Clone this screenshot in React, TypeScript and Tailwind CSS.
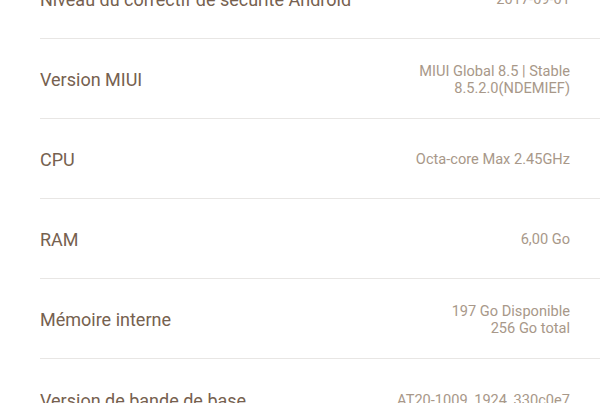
import React from 'react';

const rows: { label: string; value: string[] }[] = [
  { label: 'Niveau du correctif de sécurité Android', value: ['2017-09-01'] },
  { label: 'Version MIUI', value: ['MIUI Global 8.5 | Stable', '8.5.2.0(NDEMIEF)'] },
  { label: 'CPU', value: ['Octa-core Max 2.45GHz'] },
  { label: 'RAM', value: ['6,00 Go'] },
  { label: 'Mémoire interne', value: ['197 Go Disponible', '256 Go total'] },
  { label: 'Version de bande de base', value: ['AT20-1009_1924_330c0e7'] },
];

export default function App() {
  return (
    <div
      className="w-[600px] h-[403px] overflow-hidden bg-white"
      style={{ fontFamily: 'Roboto, "Noto Sans", sans-serif' }}
    >
      <div className="mt-[-41px] pl-10">
        {rows.map((row, i) => (
          <div
            key={row.label}
            className={`flex items-center justify-between h-[80px] pr-[30px] ${
              i < rows.length - 1 ? 'border-b border-[#e8e6e4]' : ''
            }`}
          >
            <span className="text-[18px] pt-[2px] text-[#76614f]">{row.label}</span>
            <div className="flex flex-col items-end pt-[2px] text-[14.6px] leading-[17px] text-[#a89889]">
              {row.value.map((v) => (
                <span key={v}>{v}</span>
              ))}
            </div>
          </div>
        ))}
      </div>
    </div>
  );
}
